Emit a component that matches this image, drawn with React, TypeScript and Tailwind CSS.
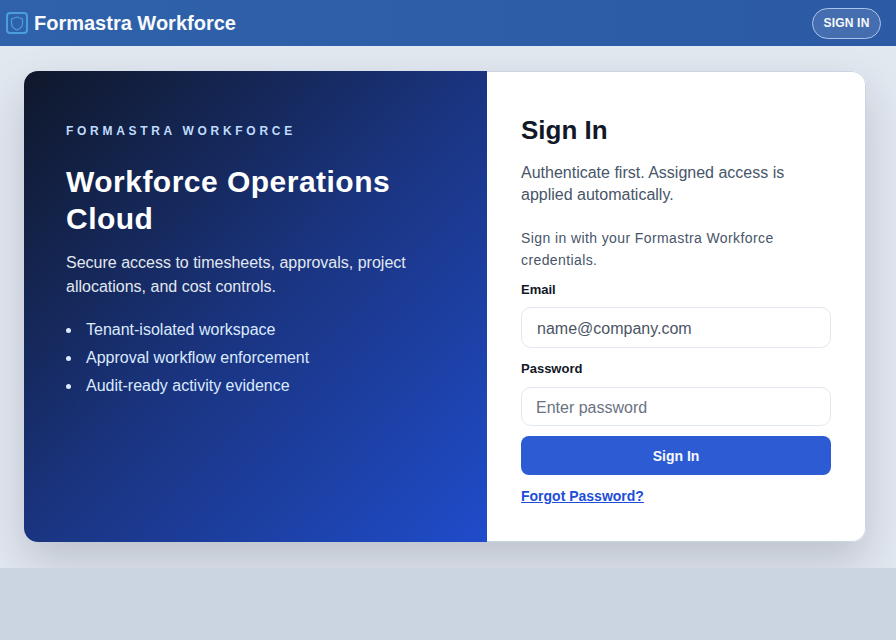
export default function App() {
  return (
    <div className="flex h-[640px] w-[896px] flex-col overflow-hidden bg-[#cbd5e1] font-['Liberation_Sans',Arial,sans-serif]">
      <header className="flex h-[46px] shrink-0 items-center justify-between bg-gradient-to-r from-[#2f62aa] to-[#2c5aa5] pl-[6px] pr-[15px]">
        <div className="flex items-center gap-[6px]">
          <span className="flex h-[22px] w-[22px] items-center justify-center rounded-[4px] border-2 border-[#4a9fd8]">
            <svg width="14" height="15" viewBox="0 0 14 15" fill="none" stroke="#4a9fd8" strokeWidth="1.2" strokeLinejoin="round">
              <path d="M7 1 L12.5 3 V7.5 C12.5 10.5 10 12.8 7 14 C4 12.8 1.5 10.5 1.5 7.5 V3 Z" />
            </svg>
          </span>
          <span className="text-[20px] font-bold leading-6 text-[#f8fafc]">Formastra Workforce</span>
        </div>
        <button className="flex h-[31px] w-[69px] items-center justify-center rounded-full border-[1.5px] border-[#a9c4ea] bg-[#ffffff1f] text-[12px] font-bold tracking-[0.2px] text-[#f8fafc]">
          SIGN IN
        </button>
      </header>

      <main className="h-[522px] shrink-0 overflow-hidden bg-[#e2e8f0] px-[24px] pt-[25px]">
        <div className="flex h-[471px] w-[842px] overflow-hidden rounded-[14px] bg-white shadow-[0_20px_45px_rgba(15,23,42,0.18)]">
          <section className="w-[463px] shrink-0 bg-gradient-to-br from-[#0f172a] via-[#1a3480] to-[#1f4ccb] px-[42px] pt-[52px] text-[#f8fafc]">
            <p className="text-[12px] font-bold leading-[16px] tracking-[3.7px] text-[#bfdbfe]">FORMASTRA WORKFORCE</p>
            <h1 className="mt-[24px] text-[30px] font-bold leading-[37px] tracking-[0.48px] text-white">Workforce Operations Cloud</h1>
            <p className="mt-[14px] text-[16px] leading-[24px] text-[#e2e8f0]">
              Secure access to timesheets, approvals, project allocations, and cost controls.
            </p>
            <ul className="mt-[19px] flex flex-col gap-[4px] text-[16px] leading-[24px] text-[#dbeafe]">
              <li className="flex items-center gap-[15px]"><span className="h-[5px] w-[5px] rounded-full bg-[#dbeafe]" />Tenant-isolated workspace</li>
              <li className="flex items-center gap-[15px]"><span className="h-[5px] w-[5px] rounded-full bg-[#dbeafe]" />Approval workflow enforcement</li>
              <li className="flex items-center gap-[15px]"><span className="h-[5px] w-[5px] rounded-full bg-[#dbeafe]" />Audit-ready activity evidence</li>
            </ul>
          </section>

          <section className="flex-1 rounded-r-[14px] border border-l-0 border-[#cbd5e1] pl-[34px] pr-[34px] pt-[42px]">
            <h2 className="text-[26px] font-bold leading-[33px] text-[#111827]">Sign In</h2>
            <p className="mt-[15px] text-[16px] leading-[21.5px] text-[#475569]">
              Authenticate first. Assigned access is applied automatically.
            </p>
            <p className="mt-[22px] text-[14px] leading-[22px] tracking-[0.4px] text-[#475569]">
              Sign in with your Formastra Workforce credentials.
            </p>
            <label className="mt-[11px] block text-[13px] font-bold leading-[16px] text-[#111827]">Email</label>
            <div className="mt-[9px] flex h-[41px] items-center rounded-[10px] border-[1.5px] border-[#e2e8f0] bg-white pl-[15px] pt-[2px] text-[16px] text-[#4b5563]">
              name@company.com
            </div>
            <label className="mt-[13px] block text-[13px] font-bold leading-[16px] text-[#111827]">Password</label>
            <div className="mt-[10px] flex h-[39px] items-center rounded-[10px] border-[1.5px] border-[#e2e8f0] bg-white pl-[14px] pt-[2px] text-[16px] text-[#6b7280]">
              Enter password
            </div>
            <button className="mt-[10px] h-[39px] w-full rounded-[8px] bg-[#2d5bd3] pt-[1px] text-[14px] font-bold text-[#f8fafc]">
              Sign In
            </button>
            <a className="mt-[12px] block text-[14px] font-bold leading-[18px] text-[#1d4ed8] underline">Forgot Password?</a>
          </section>
        </div>
      </main>
    </div>
  );
}
